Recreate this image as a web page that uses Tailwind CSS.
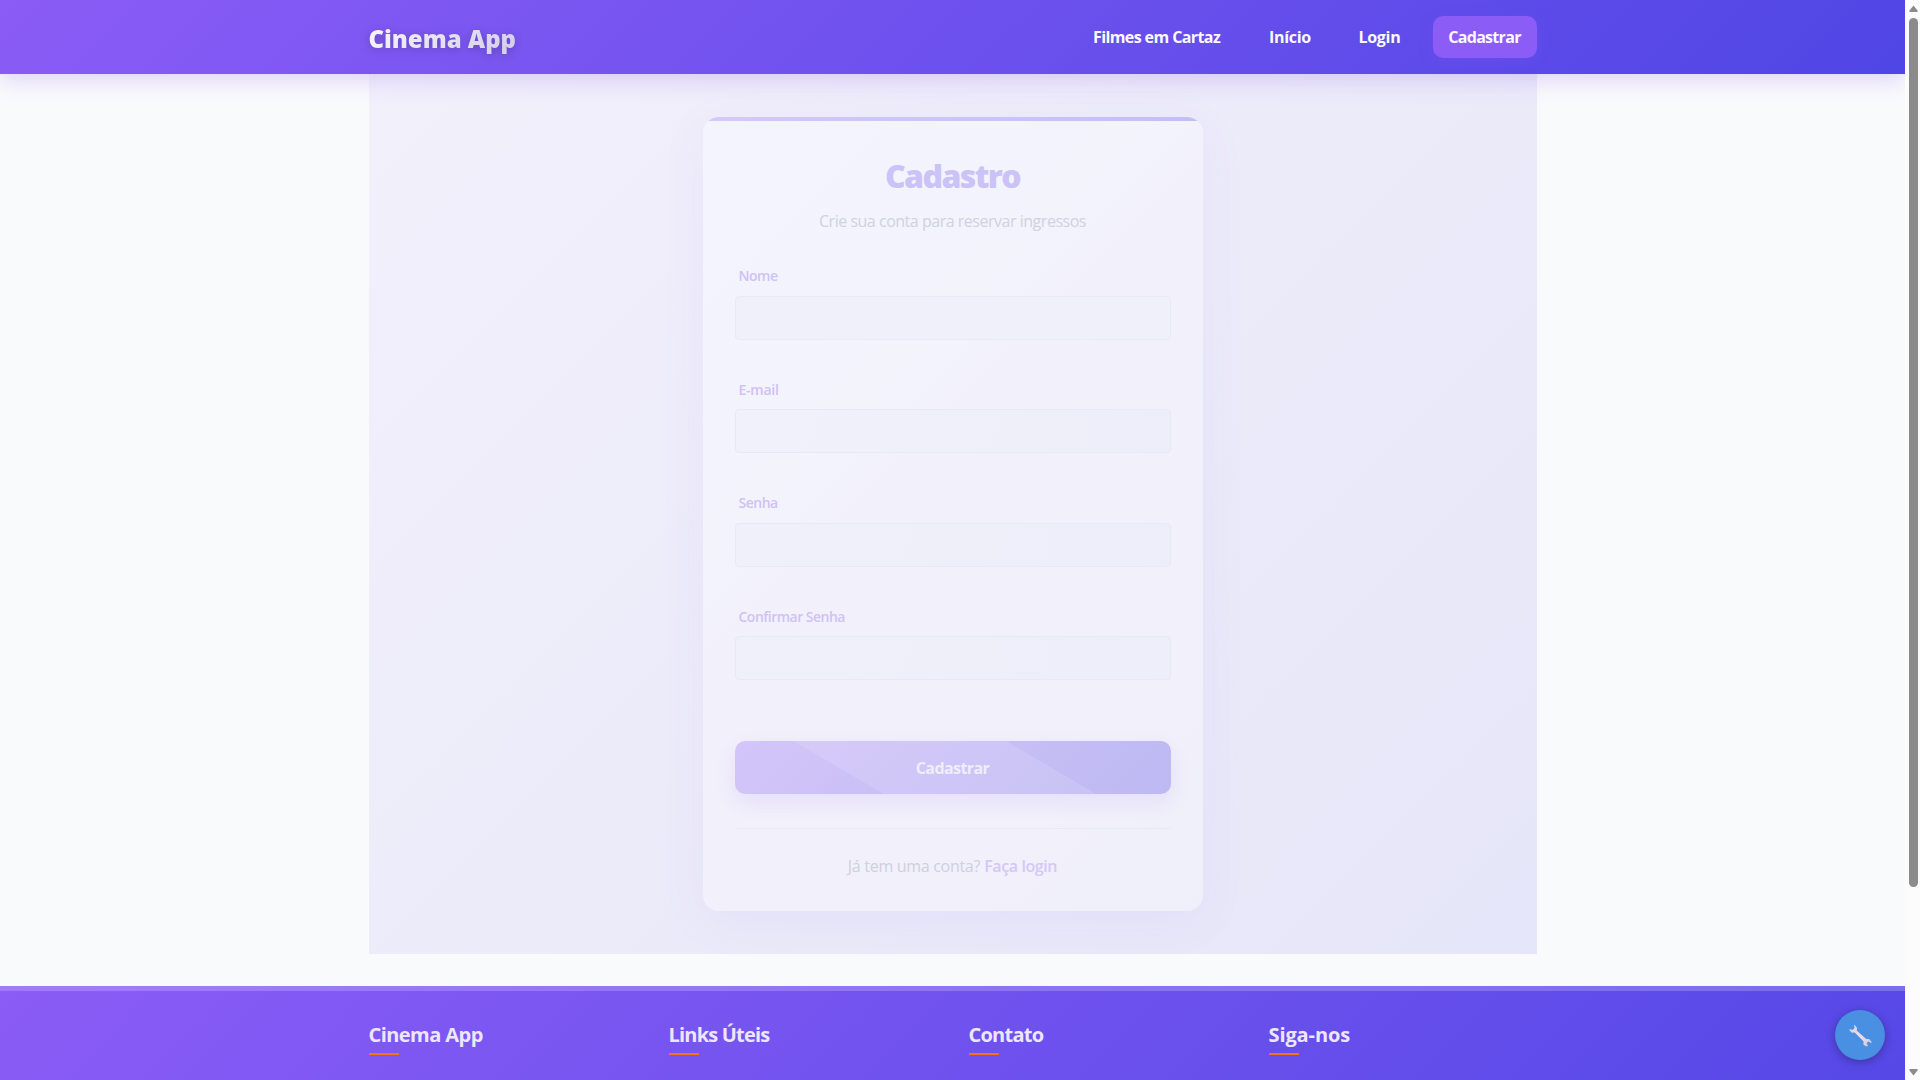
<!DOCTYPE html>
<html lang="pt-BR">
<head>
<meta charset="utf-8">
<title>Cadastro - Cinema App</title>
<script src="https://cdn.jsdelivr.net/npm/@tailwindcss/browser@4"></script>
</head>
<body class="h-screen overflow-hidden bg-[#f9fafc] font-['Open_Sans','Noto_Sans',sans-serif]">
<div class="flex h-[1080px] w-[1920px] overflow-hidden">
  <div class="flex h-full w-[1905px] flex-col overflow-hidden">

    <header class="z-10 h-[74px] shrink-0 bg-[linear-gradient(135deg,#8b5cf6,#4f46e5)] shadow-[0_4px_25px_rgba(139,92,246,0.28)]">
      <div class="mx-auto flex h-full w-[1168px] items-center justify-between">
        <a class="bg-[linear-gradient(135deg,#f8f8f8,#d3cdea)] bg-clip-text pt-[3px] text-2xl leading-8 font-extrabold tracking-[-0.03px] text-transparent drop-shadow-[0_2px_4px_rgba(0,0,0,0.2)]">Cinema App</a>
        <nav class="flex items-center text-base font-bold text-[#fbf9ff]">
          <a class="w-[176px] tracking-[-0.6px]">Filmes em Cartaz</a>
          <a class="w-[89.5px] tracking-[-0.3px]">Início</a>
          <a class="w-[74px] tracking-[-0.3px]">Login</a>
          <a class="flex h-[42px] w-[104px] items-center justify-center rounded-[10px] bg-[#8b5cf6] tracking-[-0.7px] shadow-[0_4px_15px_rgba(139,92,246,0.2)]">Cadastrar</a>
        </nav>
      </div>
    </header>

    <main class="mx-auto h-[880px] w-[1168px] shrink-0 bg-[linear-gradient(135deg,#f2f0fb,#ecebf9_50%,#e5e6f9)] pt-[43px]">
      <section class="mx-auto h-[794px] w-[500px] rounded-[16px] bg-[linear-gradient(135deg,#f3f4fd,#f3f3fc_35%,#f2f0fb_50%,#f1f0fb_80%,#efeff9)] shadow-[0_10px_50px_rgba(139,92,246,0.06)]">
        <div class="h-full overflow-hidden rounded-[16px]">
          <div class="h-1 bg-[linear-gradient(90deg,#d5c8fa,#c2bff4)]"></div>
          <div class="mx-auto w-[436px] pt-[35px]">
            <h1 class="text-center text-[32px] leading-10 font-extrabold tracking-[-1.6px] text-[#cbc3f7]">Cadastro</h1>
            <p class="mt-[13px] text-center text-base leading-6 tracking-[-0.48px] text-[#ced2e1]">Crie sua conta para reservar ingressos</p>

            <form class="mt-[33px]">
              <div class="h-[113.4px]">
                <label class="block pl-1 text-sm leading-5 font-semibold tracking-[-0.45px] text-[#d1c1f5]">Nome</label>
                <div class="mt-2.5 h-[44px] rounded-[4px] border border-[#e9e9f7] bg-[#f0f0fb]"></div>
              </div>
              <div class="h-[113.4px]">
                <label class="block pt-px pl-1 text-sm leading-5 font-semibold tracking-[-0.25px] text-[#d1c1f5]">E-mail</label>
                <div class="mt-[9px] h-[44px] rounded-[4px] border border-[#e8e8f7] bg-[linear-gradient(100deg,#f1f1fb,#eeeefa)]"></div>
              </div>
              <div class="h-[113.4px]">
                <label class="block pl-1 text-sm leading-5 font-semibold tracking-[-0.5px] text-[#d1c1f5]">Senha</label>
                <div class="mt-2.5 h-[44px] rounded-[4px] border border-[#e8e8f7] bg-[linear-gradient(100deg,#f0f0fb,#eeeefa)]"></div>
              </div>
              <div class="h-[113.4px]">
                <label class="block pt-px pl-1 text-sm leading-5 font-semibold tracking-[-0.52px] text-[#d1c1f5]">Confirmar Senha</label>
                <div class="mt-[9px] h-[44px] rounded-[4px] border border-[#e8e8f7] bg-[linear-gradient(100deg,#f0f0fb,#edeef9)]"></div>
              </div>

              <button type="button" class="relative mt-[21px] block h-[53px] w-full rounded-[10px] bg-[linear-gradient(135deg,#d3c5f9,#bdb9f2)] text-center shadow-[0_8px_20px_rgba(139,92,246,0.11)]">
                <svg class="absolute inset-0 h-full w-full" viewBox="0 0 436 53" preserveAspectRatio="none"><path d="M58 0H271L361 53H149Z" fill="#fff" fill-opacity=".12"/></svg>
                <span class="relative top-[1px] text-base font-bold tracking-[-0.58px] text-[#f0eefc]">Cadastrar</span>
              </button>
            </form>

            <div class="mt-[34.2px] border-t border-[#e8e8f6] pt-[25px] text-center text-base leading-6 whitespace-nowrap text-[#cdd1e0]">
              <span class="tracking-[-0.3px]">Já tem uma conta?</span> <a class="font-semibold tracking-[-0.4px] text-[#d4c7f9]">Faça login</a>
            </div>
          </div>
        </div>
      </section>
    </main>

    <footer class="mt-8 h-[325px] shrink-0 bg-[linear-gradient(135deg,#8b5cf6,#4f46e5)]">
      <div class="h-[5px] bg-white/20"></div>
      <div class="mx-auto grid w-[1168px] grid-cols-4 gap-8 pt-[29px] text-xl leading-[30px] font-bold text-[#ece7fd]">
        <div><h2 class="tracking-[-0.55px]">Cinema App</h2><div class="mt-[3px] h-0.5 w-[30px] bg-[#f97316]"></div></div>
        <div><h2 class="tracking-[-0.8px]">Links Úteis</h2><div class="mt-[3px] h-0.5 w-[30px] bg-[#f97316]"></div></div>
        <div><h2 class="tracking-[-0.76px]">Contato</h2><div class="mt-[3px] h-0.5 w-[30px] bg-[#f97316]"></div></div>
        <div><h2 class="tracking-[-0.1px]">Siga-nos</h2><div class="mt-[3px] h-0.5 w-[30px] bg-[#f97316]"></div></div>
      </div>
    </footer>
  </div>

  <div class="flex h-full w-[15px] flex-col items-center bg-[#fcfcfc] pl-px">
    <svg class="mt-[5px] h-[7px] w-[9px]" viewBox="0 0 9 7"><path d="M4.5 0.5 8.5 5.5Q9 7 8 7H1Q0 7 .5 5.5Z" fill="#8b8b8b"/></svg>
    <div class="mt-[6px] h-[869px] w-[9px] rounded-full bg-[#8b8b8b]"></div>
    <svg class="mt-auto mb-1 h-[7px] w-[9px]" viewBox="0 0 9 7"><path d="M4.5 6.5 8.5 1.5Q9 0 8 0H1Q0 0 .5 1.5Z" fill="#8b8b8b"/></svg>
  </div>
</div>

<button type="button" class="fixed right-[35px] bottom-5 z-20 flex size-[50px] items-center justify-center rounded-full bg-[#4a90e2] shadow-[0_2px_10px_rgba(0,0,0,0.3)]">
  <svg class="size-[23px]" viewBox="0 0 24 24">
    <defs><linearGradient id="steel" x1="0" y1="0" x2="1" y2="1"><stop offset="0" stop-color="#d6d3da"/><stop offset=".5" stop-color="#ecdcf3"/><stop offset="1" stop-color="#cdc9d2"/></linearGradient></defs>
    <path fill="url(#steel)" d="M5.200 .8 6.200 1.200 8.300 4 8.200 7 18 15.600 21 15.600 23.500 18.500 23.200 20 20.500 18.200 18.300 19.900 19.800 22.800 18 23.500 15 21.500 15.200 18.300 6 8.900 3 9.200 .6 6.800 .8 5.200 3.600 6.300 5.800 4.300Z"/>
  </svg>
</button>
</body>
</html>
